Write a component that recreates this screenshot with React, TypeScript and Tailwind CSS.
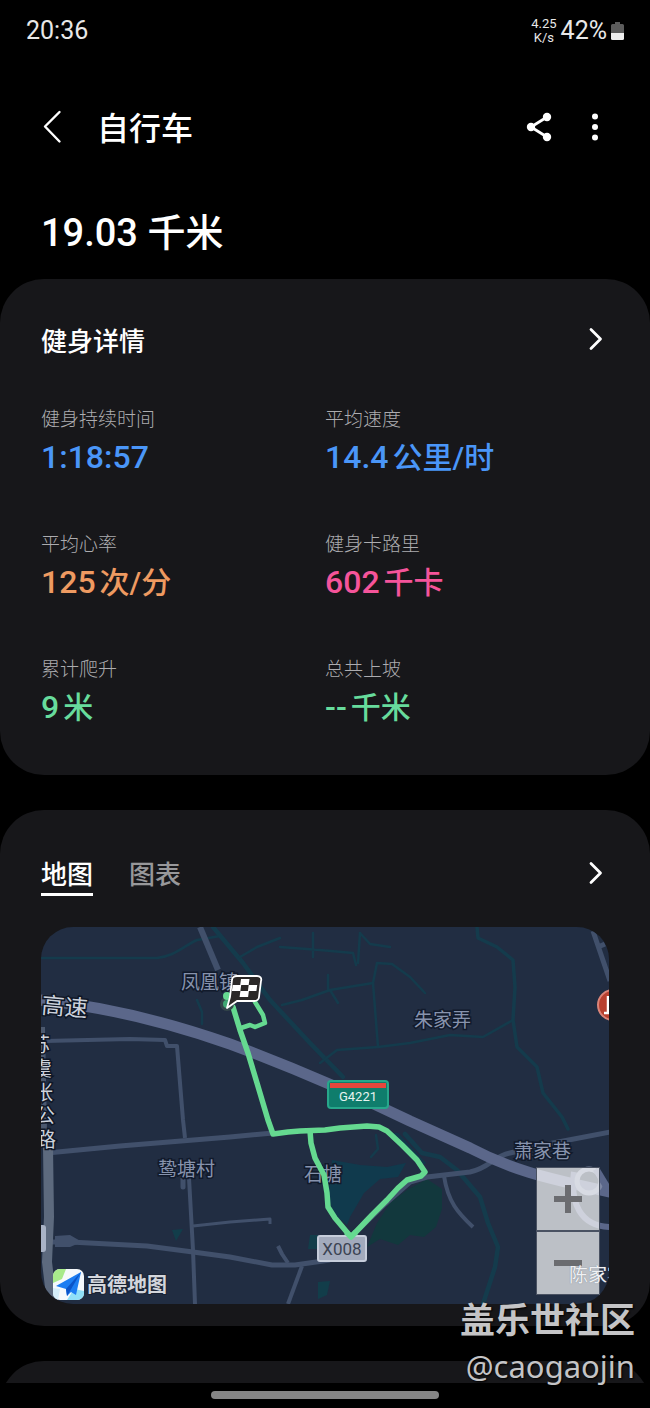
/*
  Cycling workout summary
  Dark page, rounded cards, route drawn over a night map
*/
import { useState } from "react";

const stats = [
  { label: "健身持续时间", value: "1:18:57", unit: "", color: "text-[#4a96f8]" },
  { label: "平均速度", value: "14.4", unit: "公里/时", color: "text-[#4a96f8]" },
  { label: "平均心率", value: "125", unit: "次/分", color: "text-[#ee9a61]" },
  { label: "健身卡路里", value: "602", unit: "千卡", color: "text-[#f5549a]" },
  { label: "累计爬升", value: "9", unit: "米", color: "text-[#67dc9c]" },
  { label: "总共上坡", value: "--", unit: "千米", color: "text-[#67dc9c]" },
];

const places = [
  { name: "凤凰镇", x: 141, y: 62 },
  { name: "朱家弄", x: 374, y: 100 },
  { name: "鸷塘村", x: 118, y: 249 },
  { name: "石塘", x: 264, y: 254 },
  { name: "萧家巷", x: 474, y: 231 },
];

// Road name running down the left edge, one glyph per step
const sideRoad = [
  { char: "苏", x: -10, y: 125 },
  { char: "虞", x: -8, y: 149 },
  { char: "张", x: -7, y: 173 },
  { char: "公", x: -5, y: 196 },
  { char: "路", x: -4, y: 220 },
];

function Chevron() {
  return (
    <svg width="28" height="28" viewBox="0 0 28 28" fill="none" aria-hidden="true">
      <path d="M10 4.500 19.500 14 10 23.500" stroke="#fff" strokeWidth="2.800" strokeLinecap="round" strokeLinejoin="round" />
    </svg>
  );
}

function StatusBar() {
  return (
    <div className="flex h-[62px] items-center justify-between px-[26px] text-[25px] text-[#e8e8e8]">
      <span>20:36</span>
      <div className="flex items-center gap-1">
        <span className="flex flex-col items-center text-[13px] leading-[14px]">
          <span>4.25</span>
          <span>K/s</span>
        </span>
        <span>42%</span>
        <svg width="13" height="18" viewBox="0 0 13 18" aria-hidden="true">
          <path d="M4 0h5v2h2.500A1.500 1.500 0 0 1 13 3.500V11H0V3.500A1.500 1.500 0 0 1 1.500 2H4z" fill="#5c5c5c" />
          <path d="M0 11h13v5.500a1.500 1.500 0 0 1-1.500 1.500h-10A1.500 1.500 0 0 1 0 16.500z" fill="#efefef" />
        </svg>
      </div>
    </div>
  );
}

function Header() {
  return (
    <header className="flex h-[130px] items-center justify-between pr-[41px] pl-[38px]">
      <div className="flex items-center gap-[31px]">
        <button type="button" aria-label="返回">
          <svg width="28" height="36" viewBox="0 0 28 36" fill="none">
            <path d="M21.500 3 7 17.500 21.500 32.500" stroke="#fff" strokeWidth="2.400" strokeLinecap="round" strokeLinejoin="round" />
          </svg>
        </button>
        <h1 className="pt-1 text-[32px] leading-[44px] font-medium">自行车</h1>
      </div>
      <div className="flex items-center gap-7">
        <button type="button" aria-label="分享">
          <svg width="28" height="30" viewBox="0 0 28 30" fill="none">
            <path d="M22 5 6 15l16 10" stroke="#fff" strokeWidth="2.800" />
            <circle cx="22" cy="5" r="4.200" fill="#fff" />
            <circle cx="6" cy="15" r="4.200" fill="#fff" />
            <circle cx="22" cy="25" r="4.200" fill="#fff" />
          </svg>
        </button>
        <button type="button" aria-label="更多选项">
          <svg width="28" height="30" viewBox="0 0 28 30" fill="#fff">
            <circle cx="14" cy="4.500" r="3" />
            <circle cx="14" cy="15" r="3" />
            <circle cx="14" cy="25.500" r="3" />
          </svg>
        </button>
      </div>
    </header>
  );
}

function RouteMap() {
  return (
    <div className="relative mt-[31px] overflow-hidden rounded-[32px]">
      <svg viewBox="1 0 568 377" className="block h-auto w-full" fill="none" role="img" aria-label="骑行路线">
        <rect width="570" height="377" fill="#212d42" />

        {/* Lakes and woods */}
        <path d="M292 233 320 238 347 240 366 236 358 250 340 252 324 266 310 290 307 298 294 287 288 270z" fill="#103a4d" />
        <path d="M327 320 337 296 350 276 367 263 387 252 402 262 402 282 396 300 384 310 370 308 358 318 340 312z" fill="#12383d" />
        <path d="M345 205 358 206 386 236 380 240 362 222z" fill="#12384a" />
        <path d="M132 303 143 302 136 314z M278 355 290 354 287 368 278 372z M270 308h8v14h-10z" fill="#123d4a" />

        {/* Rivers */}
        <g stroke="#143b4c" strokeWidth="2.500" strokeLinejoin="round" strokeLinecap="round">
          <path d="M2 31H117C135 29 142 20 157 13L180 9" />
          <path d="M157 73 162 85V97" />
          <path d="M173 0 203 36 230 73 270 116 303 150" strokeWidth="4.500" />
          <path d="M200 30 217 20 240 11M240 20 280 23 313 26 316 38M273 6V30M320 6 318 36M320 6 330 17 350 20" />
          <path d="M242 78 262 73 290 63 333 56 337 36 352 37 370 50 385 66M290 63 298 76M288 48V63" />
          <path d="M333 56 338 120M280 136 297 123 338 120 370 116 410 108 443 110 473 93" />
          <path d="M437 0 438 11 457 20 473 33 475 60 473 93 477 120 497 140 503 166 522 190 528 202" strokeWidth="3.500" />
          <path d="M365 207 382 226 400 230 417 243 440 270 448 296 458 320 455 340 443 377" strokeWidth="4.500" />
          <path d="M336 208 338 222 331 230" />
        </g>

        {/* Minor roads */}
        <g stroke="#41506b" strokeWidth="5" strokeLinejoin="round">
          <path d="M160 0 178 43" strokeWidth="6" />
          <path d="M5 114 90 112 125 113 127 119 137 119 143 193 145 211" strokeWidth="4" />
          <path d="M7 226 80 219 190 210 233 206" />
          <path d="M149 251 153 323 155 377" strokeWidth="4" />
          <path d="M153 299 190 295 230 292V297" strokeWidth="3" />
          <path d="M12 315H30L107 319 153 325 190 330 232 338H255L290 333" />
          <path d="M238 319 242 327 248 336" strokeWidth="4" />
          <path d="M262 339 248 377" strokeWidth="4" />
          <path d="M315 306 345 277 370 255 387 250 430 245C450 241 452 230 470 226L513 216 570 205" />
          <path d="M404 249C408 275 418 286 433 300" strokeWidth="4" />
          <path d="M553 4 570 54M558 20 565 17" />
          <path d="M143 250V260" strokeLinecap="round" />
        </g>
        <path d="M15 309 30 308 42 315 30 320H15z" fill="#41506b" />

        {/* Trunk road and expressway */}
        <path d="M2 100 4 205" stroke="#4b586e" strokeWidth="6" />
        <path d="M8 220 9 290 7 335 12 377" stroke="#5d6a7e" strokeWidth="10" />
        <path d="M0 73C70 80 130 96 190 117C260 143 310 165 370 194L430 221C470 242 500 250 570 265" stroke="#5b678a" strokeWidth="11" />
        <path d="M570 300C540 299 530 276 534 245" stroke="#5b678a" strokeWidth="6" />
        <circle cx="549" cy="254" r="12" stroke="#7c86a2" strokeWidth="5" />
        <path d="M556 242 570 265" stroke="#5b678a" strokeWidth="7" />
        <path d="M0 298h3a3 3 0 0 1 3 3v21a3 3 0 0 1-3 3H0z" fill="#a9b3c6" />

        {/* Names */}
        <g fontSize="19" fill="#8793ad" stroke="#111a2b" strokeWidth="3" paintOrder="stroke">
          {places.map((p) => (
            <text key={p.name} x={p.x} y={p.y}>
              {p.name}
            </text>
          ))}
        </g>
        <g fill="#ccd2dc" stroke="#0f1726" strokeWidth="3" paintOrder="stroke">
          <text x="1" y="86" fontSize="23" transform="rotate(5 1 86)">
            高速
          </text>
          {sideRoad.map((s) => (
            <text key={s.char} x={s.x} y={s.y} fontSize="20">
              {s.char}
            </text>
          ))}
        </g>

        {/* Route */}
        <g stroke="#65d990" strokeWidth="5.500" strokeLinejoin="round" strokeLinecap="round">
          <path d="M193 80 200 103 208 126 217 156 228 193 233 207 248 205 260 204 285 203 300 201 327 199 339 200 347 204 362 218 377 233 385 245 381 249 367 253 358 261 347 273 332 288 311 310 295 291 288 280 287 266 284 248 275 231 271 216 270 204" />
          <path d="M201 101 210 98 215 100 225 96 223 88 215 75" strokeWidth="4.500" />
        </g>

        {/* Finish flag */}
        <circle cx="187" cy="77" r="5.500" fill="#3fa873" stroke="#34464a" strokeWidth="3" />
        <circle cx="187" cy="69" r="4" fill="#65d990" />
        <path d="M197 49H217C220 49 222 51 221 54L219 70C219 72 217 74 214 74H197L187 81 190 70 192 53C192 51 194 49 197 49Z" fill="#2b2827" stroke="#fff" strokeWidth="1.800" strokeLinejoin="round" />
        <path d="M201 52h8.500l-.8 6h-8.500zM192.700 58h8.500l-.8 6h-8.500zM208.700 58h8.500l-.8 6h-8.500zM200.400 64h8.500l-.8 6h-8.500z" fill="#fff" />

        {/* Road shields */}
        <rect x="288" y="154" width="60" height="27" rx="3" fill="#0f7d6c" stroke="#27a78b" strokeWidth="2" />
        <rect x="290" y="156" width="56" height="5" fill="#e5463c" />
        <text x="318" y="174" fontSize="13" textAnchor="middle" fill="#e6f4f0">
          G4221
        </text>
        <rect x="278" y="309" width="48" height="25" rx="2" fill="#a2aabc" stroke="#c6cddb" strokeWidth="2" />
        <path d="M306 305 311 310 316 305" stroke="#65d990" strokeWidth="5.500" strokeLinejoin="round" />
        <text x="302" y="328" fontSize="17" textAnchor="middle" fill="#3b4353">
          X008
        </text>

        {/* Station marker */}
        <circle cx="573" cy="78" r="15" fill="#b8402f" stroke="#d98378" strokeWidth="2" />
        <path d="M564 86H568V69" stroke="#fff" strokeWidth="2.500" />

        {/* Map provider */}
        <clipPath id="logo">
          <rect x="13" y="342" width="31" height="31" rx="7" />
        </clipPath>
        <g clipPath="url(#logo)">
          <path d="M13 342h31v31H13z" fill="#f5f9fc" />
          <path d="M13 342h13l-4 10-9 4z" fill="#a8ea8b" />
          <path d="M27 373 34 362 44 364V373z" fill="#8fe0f8" />
          <path d="M13 361 20 362 18 373H13z" fill="#d5eef9" />
          <path d="M41 345 16 359 26 362 27 369 31 365 36 368z" fill="#1c7df2" />
          <path d="M41 345 26 362 27 369 30 364z" fill="#0b54c8" />
        </g>
        <text x="47" y="365" fontSize="20" fontWeight="700" fill="#d3d6dc" stroke="#1a2334" strokeWidth="2" paintOrder="stroke">
          高德地图
        </text>
      </svg>

      {/* Zoom buttons float over the map */}
      <div className="absolute right-[9px] bottom-[9px] flex flex-col">
        <button type="button" aria-label="放大" className="flex h-16 w-16 items-center justify-center border border-[#4a5262] bg-white/70">
          <svg width="28" height="28" viewBox="0 0 28 28" fill="#6b6c70">
            <path d="M11 0h6v11h11v6H17v11h-6V17H0v-6h11z" />
          </svg>
        </button>
        <button type="button" aria-label="缩小" className="flex h-16 w-16 items-center justify-center border border-[#4a5262] bg-white/70">
          <svg width="28" height="28" viewBox="0 0 28 28" fill="#6b6c70">
            <path d="M0 11h28v6H0z" />
          </svg>
        </button>
      </div>

      {/* This name runs over the zoom buttons and off the map */}
      <span className="pointer-events-none absolute -right-[17px] bottom-[14px] text-[19px] leading-7 whitespace-nowrap text-[#f0f1f4] [text-shadow:0_0_1px_#6a7282]">
        陈家宅
      </span>
    </div>
  );
}

export default function App() {
  const [tab, setTab] = useState("地图");

  return (
    <div className="relative flex min-h-screen flex-col bg-black font-[Roboto,'Noto_Sans_CJK_SC',sans-serif] text-white">
      <StatusBar />
      <Header />
      <p className="px-[41px] pt-[14px] pb-[18px] text-[38px] leading-[55px] font-medium">19.03 千米</p>

      <main className="flex flex-col gap-[35px]">
        <section className="rounded-[44px] bg-[#17171a] px-[41px] pt-[38px] pb-[45px]">
          <div className="flex h-11 items-center justify-between">
            <h2 className="pt-[6px] text-[26px] font-medium">健身详情</h2>
            <button type="button" aria-label="查看健身详情">
              <Chevron />
            </button>
          </div>
          <dl className="mt-[45px] grid grid-cols-2 gap-y-[51px]">
            {stats.map((s) => (
              <div key={s.label}>
                <dt className="text-[19px] leading-7 font-light text-[#acacaf]">{s.label}</dt>
                <dd className={`flex h-[46px] items-baseline gap-1 text-[32px] leading-[46px] font-medium ${s.color}`}>
                  {s.value}
                  {s.unit && <span className="text-[30px] leading-10">{s.unit}</span>}
                </dd>
              </div>
            ))}
          </dl>
        </section>

        <section className="rounded-[44px] bg-[#17171a] px-[41px] pt-10 pb-[22px]">
          <div className="flex h-[46px] items-center justify-between">
            <div className="flex h-full items-end gap-9" role="tablist">
              {["地图", "图表"].map((name) => (
                <button
                  key={name}
                  type="button"
                  role="tab"
                  aria-selected={tab === name}
                  onClick={() => setTab(name)}
                  className={`border-b-[3px] text-[26px] leading-9 font-medium ${
                    tab === name ? "border-white text-white" : "border-transparent text-[#98989a]"
                  }`}
                >
                  {name}
                </button>
              ))}
            </div>
            <button type="button" aria-label="查看地图">
              <Chevron />
            </button>
          </div>
          <RouteMap />
        </section>

        {/* Next card, only its top edge is in view */}
        <div className="h-[22px] overflow-hidden">
          <div className="h-24 rounded-[44px] bg-[#17171a]" />
        </div>
      </main>

      <div className="flex h-[25px] justify-center pt-2">
        <div className="h-2 w-[35%] rounded-full bg-[#858585]" />
      </div>

      <div className="pointer-events-none absolute right-[15px] bottom-5 text-right text-[#c4c4c6] [text-shadow:1px_1px_2px_#000]">
        <p className="text-[35px] leading-[44px] font-bold">盖乐世社区</p>
        <p className="font-['Noto_Sans',sans-serif] text-[31px] leading-[44px]">@caogaojin</p>
      </div>
    </div>
  );
}
